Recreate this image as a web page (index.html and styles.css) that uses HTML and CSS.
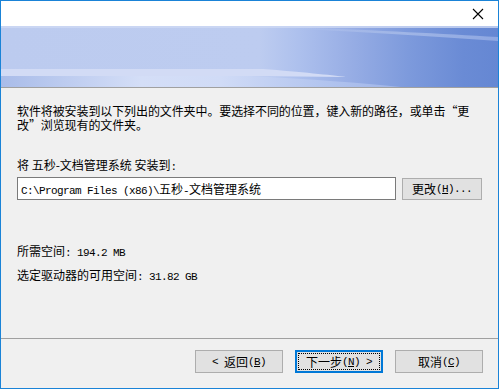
FILE: index.html
```html
<!DOCTYPE html>
<html lang="zh-CN">
<head>
    <meta charset="UTF-8">
    <title>安装</title>
    <link rel="stylesheet" href="styles.css">
</head>
<body>
    <div class="window">
        <div class="titlebar">
            <svg class="close" width="12" height="12" viewBox="0 0 12 12">
                <path d="M1 1 L11 11 M11 1 L1 11" stroke="#000" stroke-width="1.1" fill="none"/>
            </svg>
        </div>

        <div class="banner">
            <svg width="497" height="61" viewBox="0 0 497 61">
                <defs>
                    <linearGradient id="base" x1="0" x2="1" y1="0" y2="0">
                        <stop offset="0" stop-color="#bccbef"/>
                        <stop offset="0.52" stop-color="#bdccf0"/>
                        <stop offset="0.6" stop-color="#adc0ed"/>
                        <stop offset="0.7" stop-color="#98aee5"/>
                        <stop offset="0.82" stop-color="#7d9adc"/>
                        <stop offset="0.93" stop-color="#6a8bd5"/>
                        <stop offset="1" stop-color="#6587d3"/>
                    </linearGradient>
                    <linearGradient id="low" x1="0" x2="1" y1="0" y2="0">
                        <stop offset="0" stop-color="#a9bce9"/>
                        <stop offset="0.35" stop-color="#d4def7"/>
                        <stop offset="0.55" stop-color="#d0dbf6"/>
                        <stop offset="0.8" stop-color="#b3c5ef"/>
                        <stop offset="1" stop-color="#9fb4e8"/>
                    </linearGradient>
                    <linearGradient id="streak" x1="0" x2="1" y1="0" y2="0">
                        <stop offset="0" stop-color="#c9d5f3" stop-opacity="0"/>
                        <stop offset="0.5" stop-color="#a9bde9" stop-opacity="0.8"/>
                        <stop offset="1" stop-color="#8ea7e2"/>
                    </linearGradient>
                </defs>
                <rect width="497" height="61" fill="url(#base)"/>
                <rect width="497" height="2" fill="#cdd8f4" opacity="0.8"/>
                <path d="M300 2 C380 4 440 8 497 11 L497 15 C440 11 380 7 300 3 Z" fill="url(#streak)"/>
                <path d="M0 50 L250 50 C310 53 360 57 400 61 L0 61 Z" fill="url(#low)"/>
                <path d="M0 43 L262 43 C300 46 330 49 345 51 L250 50 L0 50 Z" fill="#d2dbf5"/>
            </svg>
        </div>

        <div class="content">
            <p class="intro">软件将被安装到以下列出的文件夹中。要选择不同的位置，键入新的路径，或单击“更<br>改”浏览现有的文件夹。</p>

            <p class="label">将 五秒-文档管理系统 安装到<span class="en">:</span></p>

            <div class="path-row">
                <div class="path-input"><span class="en">C:\Program Files (x86)\</span>五秒<span class="en">-</span>文档管理系统</div>
                <button class="btn">更改<span class="en">(<u>H</u>)...</span></button>
            </div>

            <p class="space first">所需空间<span class="en">: 194.2 MB</span></p>
            <p class="space">选定驱动器的可用空间<span class="en">: 31.82 GB</span></p>
        </div>

        <div class="footer">
            <button class="btn"><span class="en">&lt;&nbsp;</span>返回<span class="en">(<u>B</u>)</span></button>
            <button class="btn default"><span class="focus">下一步<span class="en">(<u>N</u>)&nbsp;&gt;</span></span></button>
            <button class="btn">取消<span class="en">(<u>C</u>)</span></button>
        </div>
    </div>
</body>
</html>
```

FILE: styles.css
```css
* {
    box-sizing: border-box;
    margin: 0;
    padding: 0;
}

body {
    background: #ffffff;
    font-family: "Noto Sans CJK SC", "Liberation Sans", sans-serif;
    font-size: 12px;
    color: #000000;
}

.window {
    width: 499px;
    height: 389px;
    border: 1px solid #1a83d7;
    background: #f0f0f0;
    display: flex;
    flex-direction: column;
}

.titlebar {
    height: 25px;
    background: #ffffff;
    display: flex;
    align-items: center;
    justify-content: flex-end;
    padding-right: 14px;
}

.close {
    display: block;
    margin-top: 1px;
}

.banner {
    height: 62px;
    border-bottom: 1px solid #a0a0a0;
}

.banner svg {
    display: block;
}

/* латиница в SimSun — по 6px на символ */
.en {
    font-family: "Liberation Mono", monospace;
    font-size: 11px;
    letter-spacing: -0.6px;
}

.content {
    height: 251px;
    padding: 16px 16px 0 16px;
    border-bottom: 1px solid #a0a0a0;
}

.intro {
    line-height: 14px;
    letter-spacing: -0.1px;
}

.label {
    margin-top: 27px;
    line-height: 12px;
}

.path-row {
    margin-top: 4px;
    display: flex;
    align-items: flex-start;
    gap: 6px;
}

.path-input {
    width: 380px;
    height: 23px;
    border: 1px solid #7a7a7a;
    background: #ffffff;
    padding: 0 3px;
    line-height: 21px;
    white-space: nowrap;
}

.btn {
    width: 88px;
    height: 23px;
    background: #e1e1e1;
    border: 1px solid #adadad;
    font-family: inherit;
    font-size: 12px;
    color: #000000;
    display: flex;
    align-items: center;
    justify-content: center;
    line-height: 12px;
}

.path-row .btn {
    width: 80px;
    height: 22px;
    margin-top: 1px;
}

.space {
    line-height: 12px;
}

.space.first {
    margin-top: 45px;
}

.space + .space {
    margin-top: 10px;
}

.footer {
    flex: 1;
    display: flex;
    justify-content: flex-end;
    align-items: flex-start;
    gap: 12px;
    padding: 11px 15px 0 0;
}

.btn.default {
    border: 2px solid #0078d7;
    padding: 1px;
}

.focus {
    width: 100%;
    height: 100%;
    border: 1px dotted #000000;
    display: flex;
    align-items: center;
    justify-content: center;
}
```
